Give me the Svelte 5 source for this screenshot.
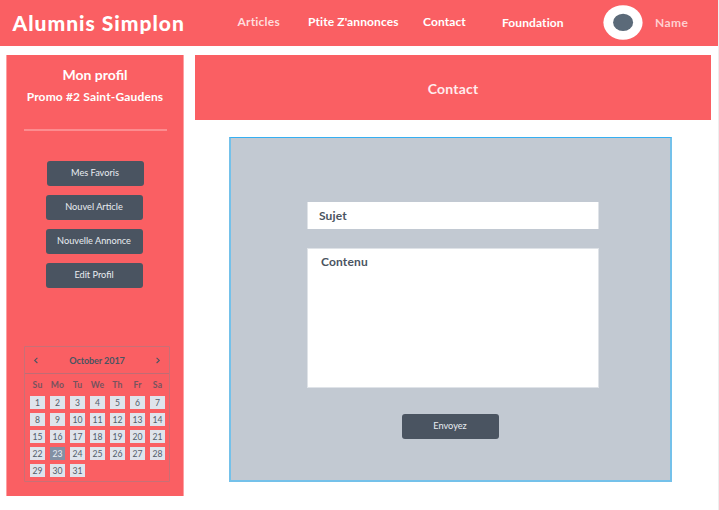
<script>
  const links = [
    { label: 'Articles', width: 70.5, dim: true },
    { label: "Ptite Z'annonces", width: 115 },
    { label: 'Contact', width: 79 },
    { label: 'Foundation', width: 101, low: true }
  ];
  const actions = [
    { label: 'Mes Favoris', shift: 1 },
    { label: 'Nouvel Article', shift: 0 },
    { label: 'Nouvelle Annonce', shift: 0 },
    { label: 'Edit Profil', shift: 0 }
  ];
  const weekdays = ['Su', 'Mo', 'Tu', 'We', 'Th', 'Fr', 'Sa'];
  const days = Array.from({ length: 31 }, (_, i) => i + 1);
</script>

<div class="page">
  <header>
    <h1>Alumnis Simplon</h1>
    <nav>
      {#each links as link}
        <a href="#top" class:dim={link.dim} class:low={link.low} style="width: {link.width}px">{link.label}</a>
      {/each}
    </nav>
    <svg class="avatar" width="40" height="36" viewBox="0 0 40 36">
      <ellipse cx="20" cy="17.5" rx="19.6" ry="17.2" fill="#fff" />
      <ellipse cx="20.1" cy="17.4" rx="10" ry="8.7" fill="#5b6a79" />
    </svg>
    <span class="name">Name</span>
  </header>

  <div class="body">
    <aside>
      <h2>Mon profil</h2>
      <p class="promo">Promo #2 Saint-Gaudens</p>
      <hr />
      <div class="actions">
        {#each actions as action}
          <button style="margin-left: {action.shift}px">{action.label}</button>
        {/each}
      </div>
      <section class="calendar">
        <div class="month">
          <svg width="6" height="8" viewBox="0 0 6 8"><path d="M4.4 1.8 1.7 4.4l2.7 2.6" /></svg>
          <strong>October 2017</strong>
          <svg width="6" height="8" viewBox="0 0 6 8"><path d="M1.6 1.8 4.3 4.4 1.6 7" /></svg>
        </div>
        <div class="grid weekdays">
          {#each weekdays as day}<span>{day}</span>{/each}
        </div>
        <div class="grid days">
          {#each days as day}<span class:today={day === 23}>{day}</span>{/each}
        </div>
      </section>
    </aside>

    <main>
      <div class="banner">Contact</div>
      <form>
        <div class="subject">Sujet</div>
        <div class="content">Contenu</div>
        <button type="button">Envoyez</button>
      </form>
    </main>
  </div>
</div>

<style>
  :global(body) { margin: 0; background: #fff; }
  .page {
    width: 719px; height: 510px; box-sizing: border-box; overflow: hidden;
    border-right: 1px solid #eee;
    font-family: Lato, "Liberation Sans", sans-serif;
  }
  header {
    display: flex; height: 46px; background: #fa5f63; color: #fff;
  }
  h1 {
    width: 225px; margin: 0; padding-left: 12.5px; box-sizing: border-box;
    font-size: 21px; font-weight: 900; line-height: 45px; letter-spacing: 1px;
    white-space: nowrap;
  }
  nav { display: flex; width: 366px; padding-left: 12.5px; box-sizing: border-box; }
  nav a {
    flex: none; color: #fff; font-size: 12px; font-weight: 700; line-height: 44px;
    letter-spacing: .1px; text-decoration: none; white-space: nowrap;
  }
  nav a.low { line-height: 46px; }
  nav a.dim { color: #ffdcdd; letter-spacing: .2px; }
  .avatar { margin: 5px 0 0 12px; }
  .name {
    margin-left: 12px; color: #ffcfd0; font-size: 12px; font-weight: 700;
    line-height: 46px; letter-spacing: .4px;
  }
  .body { display: flex; padding-top: 9px; }
  aside {
    display: flex; flex-direction: column; width: 178px; height: 441px; box-sizing: border-box;
    margin-left: 6px; border: solid #fda0a2; border-width: 0 1px;
    background: #fa5f63; color: #fff;
  }
  h2 {
    margin: 10px 0 0; font-size: 14px; font-weight: 700; line-height: 20px;
    text-align: center; letter-spacing: 0;
  }
  .promo {
    margin: 4px 0 0; font-size: 12px; font-weight: 700; line-height: 16px;
    text-align: center; letter-spacing: .15px; white-space: nowrap;
  }
  hr { width: 143px; height: 2px; margin: 24px 0 0 17px; border: 0; background: #fc8c8f; }
  .actions { display: flex; flex-direction: column; gap: 9px; margin: 30px 0 0 39px; }
  button {
    width: 97px; height: 25px; padding: 0 1px 3px 0; border: 0; border-radius: 3px;
    background: #4a5461; color: #e9edf1; font: 400 9.2px Lato, sans-serif; white-space: nowrap;
  }
  .calendar {
    display: flex; flex-direction: column; width: 146px; height: 136px; margin: 58px 0 0 17px;
    box-sizing: border-box; border: 1px solid #c87076; border-radius: 1px; color: #4a5461;
  }
  .month {
    display: flex; justify-content: space-between; align-items: center;
    height: 26px; padding: 0 8px; border-bottom: 1px solid #c06c74; font-size: 9.1px;
  }
  .month strong { padding-top: 1px; letter-spacing: -.1px; }
  .month svg { fill: none; stroke: #4a5461; stroke-width: 1.1; }
  .grid { display: grid; grid-template-columns: repeat(7, 15px); column-gap: 5px; margin-left: 5px; }
  .weekdays {
    margin-top: 5px; font-size: 8.6px; font-weight: 700; line-height: 12px;
    text-align: center; letter-spacing: .2px; color: #75535e;
  }
  .days { row-gap: 4px; margin-top: 5px; }
  .days span {
    height: 13px; background: #dfe4ec; color: #535d6a; font-size: 8.6px;
    line-height: 14px; text-align: center;
  }
  .days span.today { background: #8290a4; color: #e9edf4; }
  main { margin-left: 11px; }
  .banner {
    width: 516px; height: 65px; background: #fa5f63; color: #ffeced;
    font-size: 14px; font-weight: 700; line-height: 67px; text-align: center; letter-spacing: .2px;
  }
  form {
    display: flex; flex-direction: column; width: 443px; height: 345px; margin: 17px 0 0 34px;
    padding: 64px 0 0 76px; box-sizing: border-box;
    border: 2px solid #74c1ea; border-top: 1px solid #35aff2;
    background: #c2c9d2; color: #4a5461; font-size: 12px; font-weight: 700; letter-spacing: .15px;
  }
  .subject {
    width: 292px; height: 27px; padding-left: 11px; box-sizing: border-box;
    border: solid #dfe3e8; border-width: 0 1px;
    background: #fff; line-height: 27px;
  }
  .content {
    width: 292px; height: 140px; margin-top: 19px; padding: 5px 0 0 13px;
    box-sizing: border-box; border: 1px solid #dfe3e8; background: #fff; line-height: 16px;
  }
  form button { margin: 26px 0 0 95px; }
</style>
